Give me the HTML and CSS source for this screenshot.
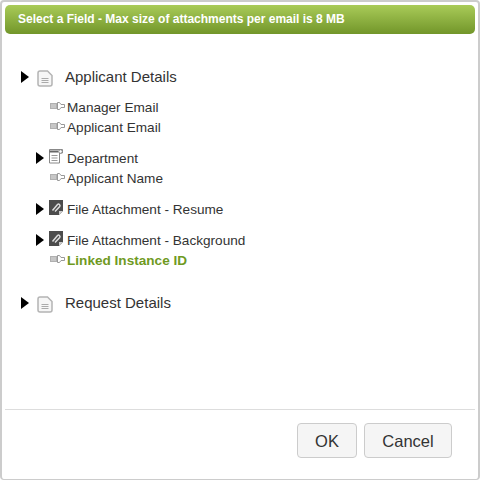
FILE: index.html
```html
<!DOCTYPE html>
<html lang="en">
<head>
    <meta charset="UTF-8">
    <title>Select a Field</title>
    <link rel="stylesheet" href="styles.css">
</head>
<body>
    <svg class="defs" width="0" height="0">
        <symbol id="doc" viewBox="0 0 16 17">
            <path d="M1 3a2 2 0 0 1 2-2h7.500l4.500 4.500V14a2 2 0 0 1-2 2H3a2 2 0 0 1-2-2z" fill="#f6f6f6" stroke="#b4b4b4" stroke-width="1.500"/>
            <path d="M4.500 8.500h7M4.500 10.500h7M4.500 12.500h7" stroke="#aaa" stroke-width="1"/>
        </symbol>
        <symbol id="field" viewBox="0 0 15 8">
            <path d="M0 1h7v6H0z" fill="#b0b0b0"/>
            <path d="M1 3h5M1 5h5" stroke="#ddd"/>
            <path d="M7.500.500h2l1.500 2h3.500v3H11l-1.500 2h-2z" fill="#fff" stroke="#999"/>
        </symbol>
        <symbol id="form" viewBox="0 0 14 15">
            <path d="M.5.500h13v3.500h-3v10H.5z" fill="#fff" stroke="#888"/>
            <path d="M.5 2.500h9" stroke="#666" stroke-width="2"/>
            <path d="M2.500 6.500h6M2.500 9h6M2.500 11.500h6" stroke="#999"/>
            <circle cx="11.500" cy="2.500" r="1.800" fill="#fff" stroke="#888"/>
        </symbol>
        <symbol id="attach" viewBox="0 0 14 15">
            <path d="M0 0h14v11l-4 4H0z" fill="#4c4c4c"/>
            <path d="M10 15v-4h4z" fill="#ccc"/>
            <path d="M3.500 10.500l5-6a1.500 1.500 0 0 1 2.200 2l-4.700 5" fill="none" stroke="#ddd" stroke-width="1.500"/>
        </symbol>
    </svg>

    <div class="dialog">
        <div class="title-bar">Select a Field - Max size of attachments per email is 8 MB</div>

        <div class="tree">
            <div class="row top">
                <span class="arrow"></span>
                <svg class="ico-doc"><use href="#doc"/></svg>
                <span class="label">Applicant Details</span>
            </div>

            <div class="row child first">
                <svg class="ico-field"><use href="#field"/></svg>
                <span>Manager Email</span>
            </div>
            <div class="row child">
                <svg class="ico-field"><use href="#field"/></svg>
                <span>Applicant Email</span>
            </div>
            <div class="row child spaced">
                <span class="arrow"></span>
                <svg class="ico-small"><use href="#form"/></svg>
                <span>Department</span>
            </div>
            <div class="row child">
                <svg class="ico-field"><use href="#field"/></svg>
                <span>Applicant Name</span>
            </div>
            <div class="row child spaced">
                <span class="arrow"></span>
                <svg class="ico-small"><use href="#attach"/></svg>
                <span>File Attachment - Resume</span>
            </div>
            <div class="row child spaced">
                <span class="arrow"></span>
                <svg class="ico-small"><use href="#attach"/></svg>
                <span>File Attachment - Background</span>
            </div>
            <div class="row child selected">
                <svg class="ico-field"><use href="#field"/></svg>
                <span>Linked Instance ID</span>
            </div>

            <div class="row top last">
                <span class="arrow"></span>
                <svg class="ico-doc"><use href="#doc"/></svg>
                <span class="label">Request Details</span>
            </div>
        </div>

        <div class="footer">
            <button class="btn btn-ok">OK</button>
            <button class="btn btn-cancel">Cancel</button>
        </div>
    </div>
</body>
</html>
```

FILE: styles.css
```css
body { margin: 0; background: #fff; font-family: "Liberation Sans", Arial, sans-serif; color: #333; }
.defs { display: block; height: 0; }
.dialog { box-sizing: border-box; width: 480px; height: 480px; padding: 3px 3px 0; border: 2px solid #ccc; border-bottom-width: 1px; border-radius: 4px; display: flex; flex-direction: column; }
.title-bar { height: 29px; line-height: 28px; padding-left: 13px; border-radius: 5px; background: linear-gradient(#a9cb58, #72962a); color: #fff; font-size: 12px; font-weight: bold; }
.tree { flex: 1; padding-top: 33px; }
.row { height: 20px; display: flex; align-items: center; font-size: 13.6px; }
.top { padding-left: 16px; padding-bottom: 2px; height: 18px; font-size: 15px; }
.last { margin-top: 23px; }
.child { padding-left: 45px; }
.first { margin-top: 10px; }
.spaced { margin-top: 11px; }
.spaced .arrow { margin-left: -14px; margin-right: 5px; }
.arrow { width: 0; height: 0; border-left: 8px solid #000; border-top: 6.5px solid transparent; border-bottom: 6.5px solid transparent; margin-right: 8px; }
.top .arrow { margin-top: 2px; }
.ico-doc { width: 16px; height: 17px; margin-top: 5px; margin-right: 12px; }
.ico-field { width: 15px; height: 8px; margin-right: 2px; margin-top: -3px; }
.ico-small { width: 14px; height: 15px; margin-right: 4px; margin-top: -3px; }
.selected { color: #6f9a1f; font-weight: bold; }
.footer { height: 68px; margin-bottom: 2px; border-top: 1px solid #ddd; display: flex; justify-content: flex-end; gap: 7px; padding: 13px 23px 0 0; box-sizing: border-box; }
.btn { height: 35px; background: #f5f5f5; border: 1px solid #ccc; border-radius: 4px; color: #333; font-family: inherit; font-size: 16.5px; padding: 2px 0 0; }
.btn-ok { width: 60px; }
.btn-cancel { width: 88px; }
```
